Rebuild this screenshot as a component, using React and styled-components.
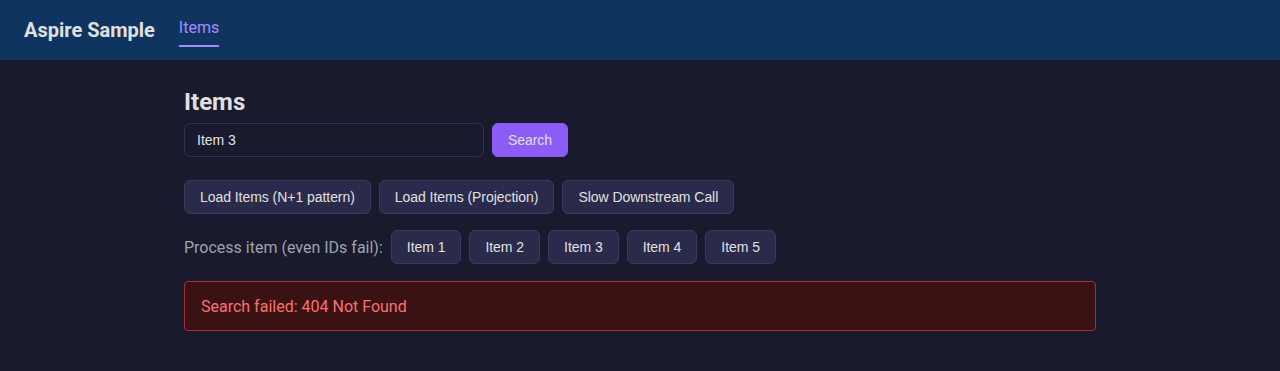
import styled, {createGlobalStyle} from 'styled-components';

const GlobalStyle = createGlobalStyle`
  html, body {
    margin: 0;
    background: #1a1a2e;
    color: #e0e0e0;
    font-family: Roboto, "Noto Sans", sans-serif;
  }
`;

const Header = styled.header`
  height: 60px;
  background: #0f3460;
  display: flex;
  align-items: center;
  gap: 24px;
  padding: 0 24px;
  box-sizing: border-box;
`;

const Brand = styled.div`
  font-size: 20px;
  font-weight: 700;
  color: #e0e0e0;
`;

const NavLink = styled.a`
  font-size: 16px;
  color: #a78bfa;
  text-decoration: none;
  padding: 0 0 8px;
  border-bottom: 2px solid #a78bfa;
  margin-top: 5px;
`;

const Main = styled.main`
  max-width: 912px;
  margin: 0 auto;
  padding-top: 28px;
`;

const Title = styled.h1`
  margin: 0 0 7px;
  font-size: 24px;
  line-height: 28px;
  font-weight: 700;
  color: #e0e0e0;
`;

const Row = styled.div`
  display: flex;
  align-items: center;
  gap: 8px;
  margin-bottom: ${(p) => p.mb || 16}px;
`;

const SearchInput = styled.input`
  width: 300px;
  height: 34px;
  box-sizing: border-box;
  padding: 0 12px;
  background: #1a1a2e;
  border: 1px solid #33334d;
  border-radius: 6px;
  color: #e0e0e0;
  font-family: "Liberation Sans", Arial, sans-serif;
  font-size: 14px;
  outline: none;
`;

const Button = styled.button`
  height: 34px;
  box-sizing: border-box;
  padding: 0 15px;
  border-radius: 6px;
  border: 1px solid ${(p) => (p.primary ? '#8b5cf6' : '#3a3a5c')};
  background: ${(p) => (p.primary ? '#8b5cf6' : '#2a2a4a')};
  color: #e0e0e0;
  font-family: "Liberation Sans", Arial, sans-serif;
  font-size: 14px;
  letter-spacing: -0.05px;
  cursor: pointer;
`;

const Label = styled.span`
  font-size: 16px;
  color: #9ca3af;
`;

const ErrorBox = styled.div`
  height: 50px;
  box-sizing: border-box;
  display: flex;
  align-items: center;
  padding: 0 16px;
  background: #3b1214;
  border: 1px solid #a82c34;
  border-radius: 4px;
  color: #f87171;
  font-size: 16px;
`;

export default function App() {
  return (
    <>
      <GlobalStyle />
      <Header>
        <Brand>Aspire Sample</Brand>
        <NavLink href="#">Items</NavLink>
      </Header>
      <Main>
        <Title>Items</Title>
        <Row mb={23}>
          <SearchInput defaultValue="Item 3" />
          <Button primary>Search</Button>
        </Row>
        <Row>
          <Button>Load Items (N+1 pattern)</Button>
          <Button>Load Items (Projection)</Button>
          <Button>Slow Downstream Call</Button>
        </Row>
        <Row mb={17}>
          <Label>Process item (even IDs fail):</Label>
          {[1, 2, 3, 4, 5].map((n) => (
            <Button key={n}>Item {n}</Button>
          ))}
        </Row>
        <ErrorBox>Search failed: 404 Not Found</ErrorBox>
      </Main>
    </>
  );
}
